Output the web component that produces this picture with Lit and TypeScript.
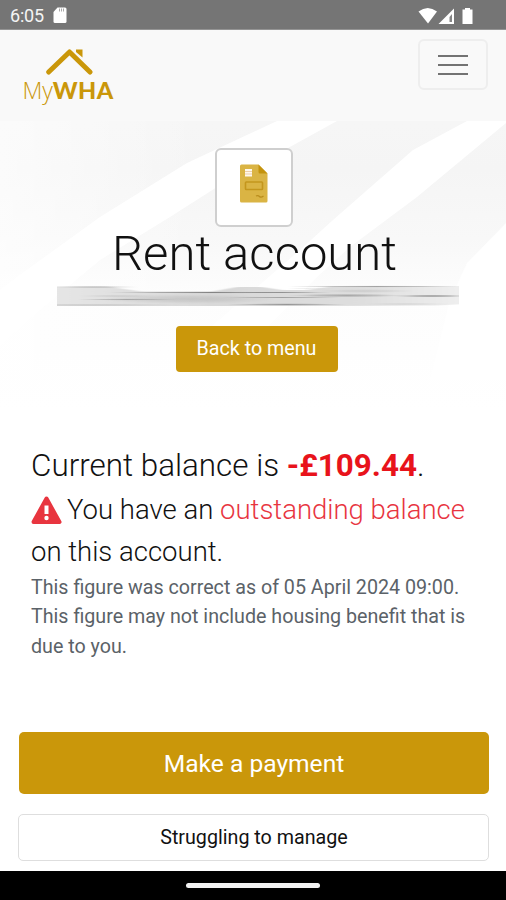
import { LitElement, html, css, svg } from "lit";
import { customElement } from "lit/decorators.js";

const streaks: [number, number, number, number, number][] = [
  // x, y, half length, half thickness, opacity
  [38, 2, 50, 1, 0.35],
  [30, 20, 110, 1, 0.25],
  [70, 14.5, 50, 1.1, 0.45],
  [60, 11, 45, 1, 0.18],
  [155, 7.5, 105, 1.1, 0.75],
  [130, 14, 90, 5, 0.18],
  [225, 7.5, 50, 1, 0.5],
  [250, 3.5, 20, 1, 0.12],
  [225, 12.5, 60, 1, 0.5],
  [230, 19.5, 60, 1.3, 0.6],
  [290, 10.5, 60, 1.8, 0.45],
  [320, 1.5, 90, 1.1, 0.55],
  [375, 11, 45, 1, 0.75],
  [310, 6, 50, 2, 0.15],
  [350, 19, 50, 1, 0.14],
];

@customElement("app-root")
export class AppRoot extends LitElement {
  static styles = css`
    :host { display: flex; flex-direction: column; width: 506px; height: 900px; overflow: hidden;
      background: #fff; font-family: Roboto, sans-serif; color: #111; }
    * { box-sizing: border-box; }
    svg { display: block; flex: none; }
    .status { flex: none; height: 30px; background: #757575; color: #f4f4f4; display: flex; align-items: center;
      padding: 2px 32px 0 10px; font-size: 18px; border-bottom: 1px solid #949494; }
    .time { width: 43px; letter-spacing: -0.2px; }
    .status .spacer { flex: 1; }
    .top { flex: none; height: 400px; display: grid; }
    .top > * { grid-area: 1 / 1; }
    .content { display: flex; flex-direction: column; align-items: center; }
    header { width: 100%; height: 91px; display: flex; justify-content: space-between; align-items: flex-start;
      padding: 9px 18px 0 22px; }
    .logo { padding-top: 9px; width: 94px; display: flex; flex-direction: column; align-items: center; }
    .word { font-family: "Open Sans", sans-serif; font-weight: 300; font-size: 23px; line-height: 28px;
      margin-left: -2px; color: #ca970a; white-space: nowrap; }
    .word b { font-family: Lato, sans-serif; font-weight: 900; font-size: 23.5px; letter-spacing: 0.4px; }
    .menu { width: 70px; height: 51px; border: 2px solid #eee; border-radius: 6px; display: flex; flex-direction: column;
      gap: 7px; align-items: center; justify-content: center; }
    .menu i { width: 30px; height: 2px; background: #737373; }
    .tile { margin: 27px 0 0 2px; width: 78px; height: 79px; border: 2px solid #cfcfcf; border-radius: 6px; background: #fff;
      display: flex; justify-content: center; padding-top: 14px; }
    h1 { margin: 0 0 0 3px; font-weight: 300; font-size: 49px; line-height: 54px; height: 56px; white-space: nowrap; }
    .brush { margin: 2px 0 0 10px; }
    .back { margin: 18px 0 0 7px; width: 162px; height: 46px; border-radius: 4px; background: #ca970a; color: #fff;
      display: flex; align-items: center; justify-content: center; font-size: 19.7px; padding-bottom: 2px; }
    .balance { padding: 14px 0 0 31px; height: 302px; flex: none; }
    .lead { font-weight: 300; font-size: 27.5px; line-height: 42px; white-space: nowrap; display: flex; align-items: center; }
    .lead.first { height: 45px; font-size: 31.4px; line-height: 42px; padding-bottom: 1px; }
    .lead b { color: #e8131b; font-weight: 700; }
    .lead em { color: #e8353f; font-style: normal; }
    .lead p, .note p { margin: 0; white-space: pre; }
    .note { font-size: 19.68px; line-height: 29.3px; color: #5b6268; }
    .alert { margin-right: 5px; }
    .pay { flex: none; margin: 0 17px 0 19px; height: 62px; border-radius: 5px; background: #ca970a; color: #fff;
      font-size: 24.6px; display: flex; align-items: center; justify-content: center; }
    .help { flex: none; margin: 20px 17px 0 18px; height: 47px; border: 1.5px solid #dedede; border-radius: 5px;
      font-size: 19.7px; display: flex; align-items: center; justify-content: center; padding: 0 0 1px 1px; }
    .nav { flex: none; margin-top: auto; height: 29px; background: #000; display: flex; justify-content: center;
      align-items: center; }
    .nav i { width: 134px; height: 5px; border-radius: 3px; background: #f2f2f2; }
  `;

  private backdrop() {
    return html`<svg width="506" height="400" viewBox="0 30 506 400">
      <defs>
        <linearGradient id="grey" x1="0" y1="0" x2="0" y2="1">
          <stop offset="0" stop-color="#f8f8f8" />
          <stop offset="0.35" stop-color="#f5f5f5" />
          <stop offset="0.52" stop-color="#f8f8f8" />
          <stop offset="0.66" stop-color="#fdfdfd" />
          <stop offset="0.95" stop-color="#fff" />
        </linearGradient>
        <linearGradient id="left"><stop offset="0" stop-color="#fff" stop-opacity="0.6" /><stop offset="0.4" stop-color="#fff" stop-opacity="0" /></linearGradient>
      </defs>
      <rect y="30" width="506" height="400" fill="url(#grey)" />
      <rect y="121" width="506" height="309" fill="url(#left)" />
      <rect y="30" width="506" height="91" fill="#f9f9f9" />
      <path d="M277 121H337L217 187L170 217L100 260L40 310L0 345V290L17 277L100 217L187 163Z" fill="#fff" />
      <path d="M467 121H506V123L417 197L350 247L317 277L250 345H190L300 250L333 220L413 150Z" fill="#fff" />
      <path d="M506 223L467 263L450 300L430 380H506Z" fill="#fff" />
    </svg>`;
  }

  private brush() {
    return html`<svg class="brush" width="402" height="23" viewBox="0 0 402 23">
      <defs>
        <radialGradient id="ink"><stop offset="0" stop-color="#666" /><stop offset="0.5" stop-color="#777" stop-opacity="0.7" /><stop offset="1" stop-color="#999" stop-opacity="0" /></radialGradient>
        <linearGradient id="wash"><stop offset="0" stop-color="#e6e6e6" /><stop offset="0.4" stop-color="#d8d8d8" /><stop offset="0.75" stop-color="#dedede" /><stop offset="1" stop-color="#efefef" /></linearGradient>
        <filter id="soft" x="-2%" y="-20%" width="104%" height="140%"><feGaussianBlur stdDeviation="3 0.700" /></filter>
      </defs>
      <path d="M-8 1.500H50L85 6.500H155L180 2H205L225 5H250L275 1.500H408V19L380 20.500L270 21H-8Z" fill="url(#wash)" filter="url(#soft)" />
      ${streaks.map(([x, y, rx, ry, o]) => svg`<ellipse cx=${x} cy=${y} rx=${rx} ry=${ry} fill="url(#ink)" opacity=${o} />`)}
    </svg>`;
  }

  render() {
    return html`
      <div class="status">
        <span class="time">6:05</span>
        <svg width="14" height="17" viewBox="0 0 14 17"><path d="M4.5 0.5H12a1.5 1.5 0 0 1 1.5 1.5V14.500a1.500 1.500 0 0 1-1.500 1.500H2A1.500 1.500 0 0 1 .5 14.500V5Z" fill="#fff" /><path d="M6.500 1.500v3M8.500 1.500v3M10.500 1.500v3" stroke="#aaa" stroke-width="1" /></svg>
        <span class="spacer"></span>
        <svg width="56" height="18" viewBox="418 6 56 18">
          <path d="M418.500 10.500Q427.800 3.500 437 10.500L428 22.500Z" fill="#fff" />
          <path d="M454 7.500V23H438.500Z" fill="#fff" /><path d="M452 13V21H449.500V16Z" fill="#858585" />
          <path d="M465 7h5v1.500h2.500V23H462.500V8.500H465Z" fill="#fff" />
        </svg>
      </div>
      <div class="top">
        ${this.backdrop()}
        <div class="content">
          <header>
            <div class="logo">
              <svg width="48" height="28" viewBox="0 0 48 28"><path d="M3.700 24L24.500 4L45 24" fill="none" stroke="#ca970a" stroke-width="5" stroke-linecap="round" stroke-linejoin="round" /><path d="M31 1.500h6.500V9.500L31 4Z" fill="#ca970a" /></svg>
              <div class="word">My<b>WHA</b></div>
            </div>
            <div class="menu"><i></i><i></i><i></i></div>
          </header>
          <div class="tile">
            <svg width="28" height="39" viewBox="0 0 28 39">
              <path d="M1.500 0.500H18.500L27.500 9.500V37a1.500 1.500 0 0 1-1.500 1.500H1.500A1.500 1.500 0 0 1 0 37V2A1.500 1.500 0 0 1 1.500 0.500Z" fill="#dab444" />
              <path d="M18.500 0.500L27.500 9.500H20a1.500 1.500 0 0 1-1.500-1.500Z" fill="#c4930e" />
              <path d="M5 5h7v7.500h-7Z" fill="#fff8ec" /><path d="M5 7.500h7M5 10h7" stroke="#ecc9a0" stroke-width="0.900" />
              <rect x="5.500" y="18" width="17" height="7.500" rx="0.800" fill="#dab444" stroke="#c4961c" stroke-width="1.600" />
              <path d="M16 32q2-1 3.500 0.500t4-0.500" fill="none" stroke="#b98d1c" stroke-width="1.300" />
            </svg>
          </div>
          <h1>Rent account</h1>
          ${this.brush()}
          <div class="back">Back to menu</div>
        </div>
      </div>
      <div class="balance">
        <div class="lead first"><p>Current balance is <b>-£109.44</b>.</p></div>
        <div class="lead">
          <svg class="alert" width="31" height="29" viewBox="0 0 31 29"><path d="M15.500 2.500L28.500 26H2.500Z" fill="#e8353f" stroke="#e8353f" stroke-width="4" stroke-linejoin="round" /><path d="M15.500 9.500v8.500" stroke="#fff" stroke-width="4" /><circle cx="15.500" cy="22" r="2.200" fill="#fff" /></svg>
          <p>You have an <em>outstanding balance</em></p>
        </div>
        <div class="lead"><p>on this account.</p></div>
        <div class="note"><p>This figure was correct as of 05 April 2024 09:00.</p><p>This figure may not include housing benefit that is</p><p>due to you.</p></div>
      </div>
      <div class="pay">Make a payment</div>
      <div class="help">Struggling to manage</div>
      <div class="nav"><i></i></div>
    `;
  }
}
